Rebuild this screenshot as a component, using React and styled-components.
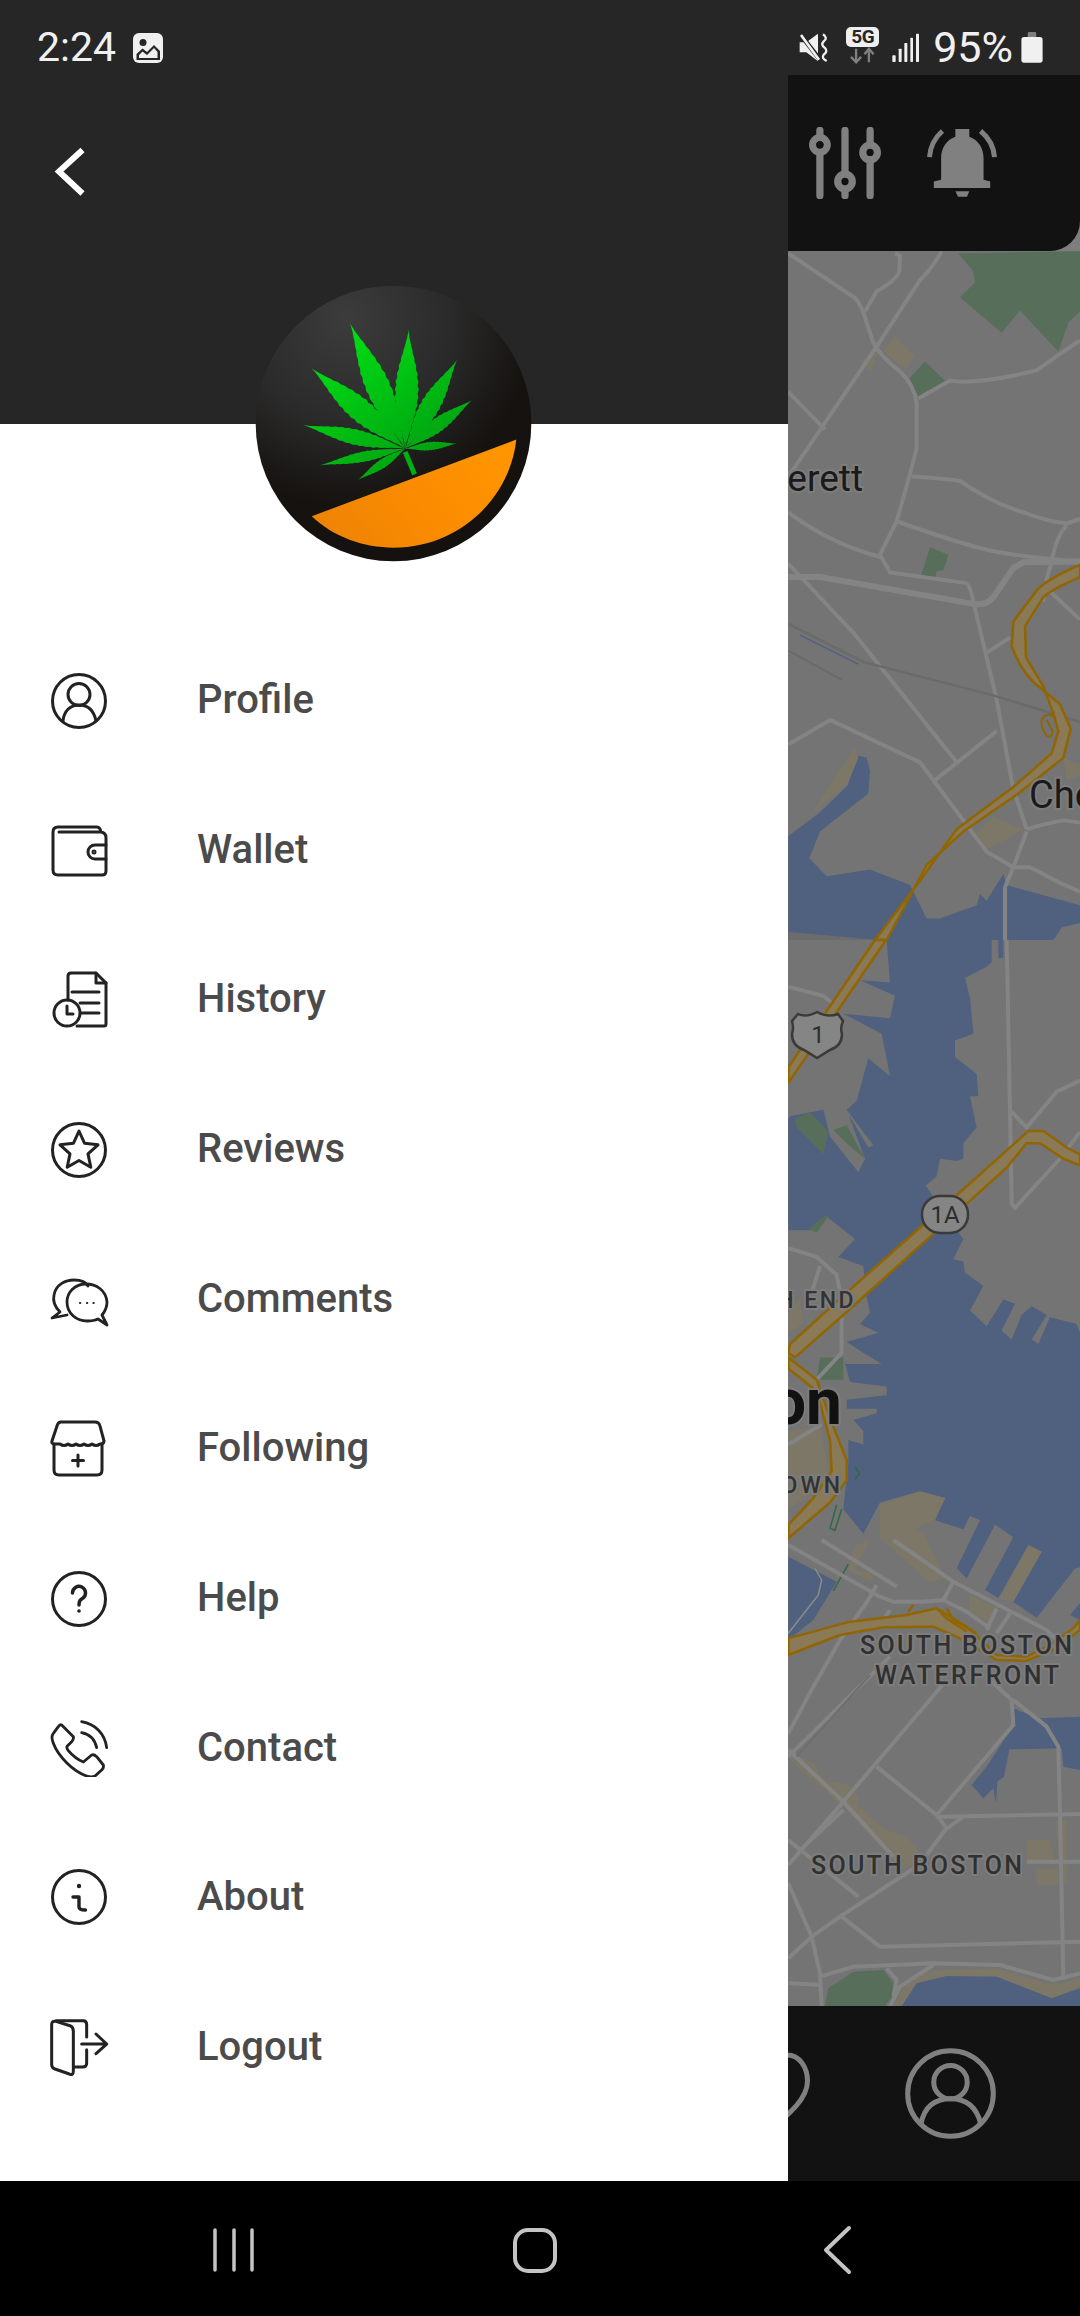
import React from "react";
import styled, { createGlobalStyle } from "styled-components";

const GlobalStyle = createGlobalStyle`
  html, body { margin: 0; padding: 0; background: #000; }
  #root { width: 1080px; height: 2316px; }
`;

const Screen = styled.div`
  width: 1080px; height: 2316px; display: flex; flex-direction: column; overflow: hidden;
  font-family: Roboto, "Liberation Sans", sans-serif; background: #000;
`;
const StatusBar = styled.div`
  height: 75px; flex: none; background: #262626; color: #f0f0f0; display: flex; align-items: center;
  padding: 20px 37px 0 37px; box-sizing: border-box;
`;
const StatusText = styled.span`
  font-size: ${p => p.$size}px; font-weight: 400; line-height: 1; margin-left: ${p => p.$ml || 0}px;
`;
const StatusGroup = styled.div`display: flex; align-items: center; margin-left: auto;`;
const StatusIcon = styled.svg`display: block; flex: none; margin-left: ${p => p.$ml || 0}px;`;
const FiveG = styled.div`display: flex; flex-direction: column; align-items: center; margin-left: 17px; width: 33px; margin-top: -4px;`;
const FiveGBadge = styled.span`
  width: 33px; height: 20px; border-radius: 5px; background: #efefef; color: #262626; font-size: 19px; font-weight: 700;
  line-height: 20px; text-align: center; letter-spacing: -.5px;
`;
const Main = styled.div`flex: 1; position: relative; display: flex; flex-direction: column; min-height: 0;`;
const TopBarBack = styled.div`height: 176px; flex: none; background: #7e7e7e;`;
const TopBar = styled.div`
  height: 100%; background: #121212; border-bottom-right-radius: 30px; display: flex; align-items: center; justify-content: flex-end;
  padding-right: 83px; gap: 45px; box-sizing: border-box;
`;
const MapArea = styled.div`
  flex: 1; min-height: 0; background: #747474;
`;
const MapSvg = styled.svg`
  display: block; width: 100%; height: 100%;
  path, polygon { vector-effect: non-scaling-stroke; }
`;
const MapLabel = styled.text`
  font-family: Roboto, "Liberation Sans", sans-serif; paint-order: stroke; stroke: #7d7d7d; stroke-width: ${p => p.$halo ?? 4}px;
  stroke-linejoin: round;
`;
const BottomBar = styled.div`
  height: 175px; flex: none; background: #121212; display: flex; align-items: center; justify-content: flex-end;
  padding-right: 84px; gap: 95px; box-sizing: border-box;
`;
const HeartIcon = styled.svg`margin-top: 2px; display: block;`;
const NavBar = styled.div`
  height: 135px; flex: none; background: #000; display: grid; grid-template-columns: repeat(3, 301px); justify-items: center;
  align-items: center; padding: 3px 0 0 83px; box-sizing: border-box;
`;
const NavBack = styled.svg`margin-left: 5px; display: block;`;
const Drawer = styled.aside`
  position: absolute; left: 0; top: 0; bottom: 0; width: 788px; background: #fff; display: flex; flex-direction: column;
`;
const DrawerHeader = styled.header`
  height: 349px; flex: none; background: #262626; position: relative; box-sizing: border-box;
`;
const BackButton = styled.svg`position: absolute; left: 50px; top: 65px;`;
const Avatar = styled.svg`position: absolute; left: 255px; top: 210px; display: block;`;
const Menu = styled.nav`display: flex; flex-direction: column; padding-top: 200px;`;
const MenuRow = styled.a`
  height: 149.7px; flex: none; display: flex; align-items: center; padding-left: 50px; color: #4b4b4b; text-decoration: none;
`;
const MenuIcon = styled.svg`
  width: 60px; height: 60px; flex: none; display: block; fill: none; stroke: #222; stroke-width: 3; stroke-linecap: round; stroke-linejoin: round;
`;
const MenuLabel = styled.span`
  margin-left: 87px; font-size: 40px; font-weight: 500; line-height: 1; position: relative; top: 1px;
`;

/* ---------- logo ---------- */
const blade = (bx, by, tx, ty, w) => {
  const dx = tx - bx, dy = ty - by, len = Math.hypot(dx, dy);
  const nx = -dy / len, ny = dx / len, n = 30, a = [], b = [];
  for (let i = 0; i <= n; i++) {
    const t = i / n;
    const hw = w * Math.pow(Math.sin(Math.PI * Math.pow(t, 0.95)), 1.35) * (i % 2 ? 1 : 0.9);
    const x = bx + dx * t, y = by + dy * t;
    a.push(`${(x + nx * hw).toFixed(1)},${(y + ny * hw).toFixed(1)}`);
    b.unshift(`${(x - nx * hw).toFixed(1)},${(y - ny * hw).toFixed(1)}`);
  }
  return a.concat(b).join(" ");
};
const BLADES = [
  [360, 160, 38], [535, 180, 36], [680, 270, 30], [725, 390, 22], [680, 520, 13],
  [245, 295, 36], [220, 465, 24], [270, 585, 16], [385, 628, 14],
];
const Logo = () => (
  <Avatar width="277" height="277" viewBox="75 45 830 830">
    <defs>
      <radialGradient id="ball" cx="0.33" cy="0.12" r="0.85">
        <stop offset="0" stopColor="#3c3c3c" />
        <stop offset="0.45" stopColor="#2a2a2a" />
        <stop offset="0.8" stopColor="#15120f" />
        <stop offset="1" stopColor="#14110e" />
      </radialGradient>
      <linearGradient id="leaf" gradientUnits="userSpaceOnUse" x1="340" y1="170" x2="620" y2="600">
        <stop offset="0" stopColor="#00e014" />
        <stop offset="1" stopColor="#009c10" />
      </linearGradient>
      <linearGradient id="orange" x1="0" y1="0.7" x2="1" y2="0.3">
        <stop offset="0" stopColor="#ee8405" />
        <stop offset="0.5" stopColor="#fb8b00" />
        <stop offset="1" stopColor="#ff9500" />
      </linearGradient>
    </defs>
    <circle cx="490" cy="460" r="413" fill="url(#ball)" />
    <g fill="url(#leaf)">
      {BLADES.map(([x, y, w], i) => <polygon key={i} points={blade(525, 535, x, y, w)} />)}
    </g>
    <path d="M525,545 L553,612" stroke="#00b010" strokeWidth="15" />
    <path d="M245,738 L858,508 C840,680 690,832 490,832 C400,832 310,800 245,738 Z" fill="url(#orange)" />
  </Avatar>
);

/* ---------- map, traced in the crop coordinates of the reference ---------- */
const Z4 = "translate(780,240) scale(.33333,.44643)";
const Z5 = "translate(780,940) scale(.33333,.44643)";
const Z10 = "translate(780,1540) scale(.33333)";
const WATER = "#4f617f", GREEN = "#566e5a", SAND = "#7c7767", ROAD = "#848484", HW = "#8a7a58", HWL = "#916500";

const z4Roads = [
  "M25,30 L225,130 Q245,145 260,185 L280,230 Q300,260 360,295 Q400,320 410,365 L410,465 Q400,500 350,630 L300,705 L330,745 L555,768 Q570,770 580,810 L650,1030 L700,1230 L740,1320",
  "M485,25 Q460,60 420,90 L280,250 L25,530",
  "M345,30 L360,35 L358,70 Q350,90 290,115 L255,160",
  "M25,340 L135,425",
  "M415,355 L510,315 Q590,325 770,292 L840,255 L900,225",
  "M395,530 Q500,535 540,540 Q640,590 730,610 Q800,630 860,635 L900,625",
  "M350,630 Q500,670 600,690 Q700,710 900,720",
  "M25,610 Q150,680 300,710",
  "M860,640 Q830,660 815,720 L800,760 L790,810",
  "M25,725 L220,880 L530,1170",
  "M25,1130 L150,1075 L420,1170 L560,1310 L620,1370 L700,1405 L750,1405 L840,1440 L900,1460",
  "M465,1210 L650,1100",
  "M620,925 L690,890",
  "M800,780 L900,850",
  "M740,1325 L700,1405 L675,1450 L675,1568",
  "M740,1320 Q780,1310 850,1300 L900,1305",
];
const z5Roads = [
  "M25,105 L130,125 L155,140",
  "M680,0 L690,380 L695,590 L705,600 L840,490 L900,430",
  "M695,385 L740,420 L830,340 L900,315",
  "M25,690 L110,710 L170,750 L185,810 L185,925 L110,985",
  "M120,730 L95,790",
  "M25,1130 L125,1085",
];
const z10Roads = [
  "M25,15 L300,170 L340,185 L430,185 L490,180 L560,215 L630,265",
  "M125,0 L350,140",
  "M340,0 L520,125 L800,270 L830,300",
  "M520,125 L490,180",
  "M650,205 L620,270",
  "M690,220 L650,280",
  "M290,135 L265,180 L180,300 L100,440 L25,580",
  "M330,210 L310,240",
  "M330,350 L25,650",
  "M500,420 L190,785 L25,975",
  "M290,680 L470,825 L500,865",
  "M25,630 L190,785 L340,950",
  "M470,825 L700,555 L695,480 L620,410",
  "M700,480 L800,560 L835,620 L840,820 L850,1320",
  "M480,830 L900,822",
  "M495,870 L550,830",
  "M495,870 L440,945",
  "M25,900 L235,1070",
  "M60,930 L190,810",
  "M440,960 L180,1130 L95,1190 L25,1255",
  "M185,1130 L300,1220 L900,1205",
  "M25,1030 L95,1190 L120,1300 L125,1400",
  "M25,1330 L125,1335",
  "M120,1310 L220,1280 L460,1270 L660,1275 L820,1320 L900,1300",
  "M460,1275 L360,1340 L330,1400",
  "M320,1285 L350,1320 L340,1370",
  "M740,965 L900,965",
];

const Roads = ({ list, w = 4 }) => (
  <g fill="none" stroke={ROAD} strokeWidth={w} strokeLinejoin="round">
    {list.map((d, i) => <path key={i} d={d} />)}
  </g>
);
const Highway = ({ d }) => <path d={d} fill={HW} stroke={HWL} strokeWidth="2.5" strokeLinejoin="round" />;

const CityMap = () => (
  <MapSvg viewBox="0 251 1080 1755" preserveAspectRatio="none">
    <g transform={Z4}>
      <polygon fill={WATER} points="25,1335 115,1285 205,1220 205,1180 235,1155 260,1160 270,1190 265,1240 120,1325 88,1385 140,1425 270,1410 390,1445 440,1520 480,1520 590,1490 600,1465 620,1480 670,1420 680,1445 900,1490 900,1530 845,1540 820,1568 640,1568 320,1568 25,1568" />
      <polygon fill="#6c6c6c" points="25,1550 300,1568 25,1568" />
      <polygon fill={GREEN} points="535,30 580,70 585,95 540,128 665,208 720,158 835,250 865,185 900,160 900,25" />
      <polygon fill={GREEN} points="388,310 435,272 495,315 415,350" />
      <polygon fill={GREEN} points="450,688 505,705 490,740 470,742 465,758 422,755" />
      <polygon fill={SAND} points="345,215 405,260 378,292 310,250" />
      <polygon fill={SAND} points="240,270 295,250 270,298" />
      <polygon fill={SAND} points="640,1290 730,1320 700,1335 620,1365 590,1330" />
      <polygon fill={SAND} points="850,1160 900,1175 900,1200 860,1210" />
      <polygon fill={SAND} points="90,1290 225,1135 235,1160 205,1215 120,1270" />
      <Roads list={z4Roads} />
      <path d="M25,755 L120,755 L580,815 Q620,820 640,800 L700,735 L730,722 L900,720" fill="none" stroke={ROAD} strokeWidth="6" />
      <path d="M25,860 L250,945 L640,1020 L900,1080" fill="none" stroke="#6a6a6a" strokeWidth="2.5" />
      <path d="M25,920 L185,985" fill="none" stroke="#6a6a6a" strokeWidth="2" />
      <path d="M60,885 L235,950" fill="none" stroke={WATER} strokeWidth="1.5" />
      <Highway d="M900,728 Q800,760 770,785 L700,855 L695,910 Q720,960 760,990 L840,1040 L872,1095 L850,1160 L715,1240 L550,1325 L440,1400 L320,1568 L285,1568 L425,1430 L530,1320 L700,1225 L815,1150 L835,1100 L820,1060 L790,1000 L738,935 L735,865 L790,800 Q820,780 900,755 Z" />
      <path d="M800,1110 Q780,1090 785,1075 Q800,1055 825,1070 M800,1110 Q815,1118 818,1100 L800,1075" fill="none" stroke={HWL} strokeWidth="2" />
    </g>
    <g transform={Z5}>
      <polygon fill={WATER} points="320,0 330,95 240,90 345,125 330,175 190,165 305,210 330,305 265,265 230,360 200,380 280,460 265,465 205,390 255,490 235,520 150,440 130,380 30,395 25,400 25,650 100,650 140,620 175,640 225,670 175,710 250,730 260,800 270,835 240,860 295,880 250,890 200,900 240,920 305,950 195,950 210,990 320,1000 320,1020 200,1030 200,1050 290,1050 290,1060 220,1075 250,1100 250,1130 205,1120 205,1170 190,1275 250,1330 300,1260 420,1235 495,1250 465,1300 550,1320 570,1290 600,1300 530,1407 560,1430 645,1310 700,1337 615,1456 655,1474 745,1355 785,1371 700,1483 770,1518 885,1408 900,1405 900,880 890,860 810,845 775,905 755,895 800,840 755,820 725,840 695,895 665,875 705,815 670,805 620,865 570,830 610,775 555,745 550,720 520,715 550,670 495,615 437,550 470,530 480,490 530,495 550,490 550,455 590,420 570,350 595,350 590,300 525,262 525,225 580,210 570,130 555,85 620,60 635,50 635,0" />
      <polygon fill={WATER} points="655,0 670,0 670,40 655,40" />
      <polygon fill={GREEN} points="45,400 90,385 145,430 130,480 50,420" />
      <polygon fill={GREEN} points="160,425 200,415 255,490 200,455" />
      <polygon fill={GREEN} points="120,935 190,935 190,985 135,985 110,985" />
      <polygon fill={GREEN} points="130,620 150,615 110,655 85,648" />
      <polygon fill={SAND} points="25,1100 120,1090 150,1200 90,1250 25,1270" />
      <polygon fill={SAND} points="300,1265 420,1235 495,1250 465,1300 400,1320 430,1330 500,1430 450,1440 300,1340" />
      <polygon fill={SAND} points="25,830 60,800 70,860 25,880" />
      <Roads list={z5Roads} />
      <Highway d="M285,0 L25,285 L25,320 L318,0 Z" />
      <Highway d="M900,480 L860,465 L790,428 L745,428 L540,565 L200,790 L30,905 L25,925 L45,935 L190,840 L680,510 L740,455 L780,455 L850,490 L900,505 Z" />
      <Highway d="M25,935 L110,985 L160,1090 L200,1165 L200,1210 L150,1260 L25,1340 L25,1310 L100,1250 L155,1190 L150,1120 L110,1010 L25,960 Z" />
      <path d="M225,1180 L238,1195 L225,1208 M170,1265 L150,1318 L165,1322 L185,1275 M205,1398 L160,1458" fill="none" stroke="#2f6a45" strokeWidth="1.5" />
    </g>
    <g transform={Z10}>
      <polygon fill={WATER} points="25,50 170,125 100,240 25,300" />
      <polygon fill={WATER} points="870,225 900,190 900,240" />
      <polygon fill={WATER} points="700,505 775,535 900,530 900,690 850,680 845,625 688,628 672,710 652,725 648,790 640,745 610,775 575,735 620,680 700,555" />
      <polygon fill={SAND} points="745,15 785,35 700,185 660,175" />
      <polygon fill={SAND} points="570,165 650,205 625,245 565,215" />
      <polygon fill={SAND} points="225,15 270,0 225,90 290,105 270,125 205,90" />
      <polygon fill={SAND} points="30,640 60,650 100,670 130,720 205,735 235,770 235,800 320,870 380,890 430,950 370,990 280,900 190,800 30,660" />
      <polygon fill={SAND} points="740,900 810,900 825,960 740,960" />
      <polygon fill={SAND} points="770,985 835,985 835,1035 770,1035" />
      <polygon fill={SAND} points="825,840 860,840 862,1030 850,1030" />
      <polygon fill={SAND} points="340,1398 390,1310 480,1290 650,1285 820,1335 900,1315 900,1340 815,1375 650,1310 500,1308 410,1330 365,1398" />
      <polygon fill={WATER} points="365,1398 410,1330 500,1308 650,1310 815,1375 900,1345 900,1398" />
      <path d="M135,1398 L145,1345 L220,1295 L310,1290 L340,1330 L340,1365 L315,1398 Z" fill={GREEN} />
      <path d="M105,85 L125,120 L115,165 L25,280" fill="none" stroke="#8a8a8a" strokeWidth="1.5" />
      <Roads list={z10Roads} />
      <path d="M50,650 L270,405" fill="none" stroke="#6e6e6e" strokeWidth="2" />
      <path d="M25,295 L210,245 L380,225 L470,205 L560,260 L650,345 L740,350 L810,315 L880,265 L900,240 L900,270 L820,330 L740,362 L650,360 L530,290 L460,260 L310,262 L180,285 L25,345 Z" fill={HW} stroke={HWL} strokeWidth="2.5" strokeLinejoin="round" />
      <path d="M385,215 L400,195 M470,205 L500,235 L560,275 M500,205 L520,240 L590,280" fill="none" stroke={HWL} strokeWidth="2.5" />
    </g>
    <path d="M792,1021 L798,1014 Q806,1018 817,1012 Q828,1018 838,1014 L843,1021 Q840,1028 842,1034 Q842,1046 830,1050 L817,1058 L804,1050 Q792,1046 792,1034 Q794,1028 792,1021 Z" fill="#858585" stroke="#3a3a3a" strokeWidth="2.5" />
    <MapLabel $halo={0} x="818" y="1043" textAnchor="middle" fontSize="24" fill="#2d2d2d">1</MapLabel>
    <rect x="922" y="1196" width="46" height="37" rx="18" fill="#858585" stroke="#3a3a3a" strokeWidth="2.5" />
    <MapLabel $halo={0} x="945" y="1223" textAnchor="middle" fontSize="24" fill="#2d2d2d">1A</MapLabel>
    <MapLabel x="863" y="491" textAnchor="end" fontSize="37" fill="#1a1a1a">Everett</MapLabel>
    <MapLabel x="1029" y="808" fontSize="38" fill="#1a1a1a">Chelsea</MapLabel>
    <MapLabel x="842" y="1424" textAnchor="end" fontSize="64" fontWeight="700" fill="#111">Boston</MapLabel>
    <MapLabel x="856" y="1308" textAnchor="end" fontSize="23" fontWeight="500" letterSpacing="2.5" fill="#333">NORTH END</MapLabel>
    <MapLabel x="843" y="1493" textAnchor="end" fontSize="23" fontWeight="500" letterSpacing="3" fill="#333">DOWNTOWN</MapLabel>
    <MapLabel x="860" y="1654" fontSize="25" fontWeight="500" textLength="212" fill="#303030">SOUTH BOSTON</MapLabel>
    <MapLabel x="875" y="1684" fontSize="25" fontWeight="500" textLength="184" fill="#303030">WATERFRONT</MapLabel>
    <MapLabel x="811" y="1874" fontSize="25" fontWeight="500" textLength="211" fill="#303030">SOUTH BOSTON</MapLabel>
  </MapSvg>
);

/* ---------- menu icons ---------- */
const star = (() => {
  const pts = [];
  for (let i = 0; i < 10; i++) {
    const r = i % 2 ? 9.5 : 20, a = -Math.PI / 2 + (i * Math.PI) / 5;
    pts.push(`${(29 + r * Math.cos(a)).toFixed(1)},${(33 + r * Math.sin(a)).toFixed(1)}`);
  }
  return pts.join(" ");
})();
const ICONS = {
  profile: (<>
    <circle cx="29" cy="32" r="26.5" />
    <circle cx="29" cy="25.5" r="11" />
    <path d="M13,52 C14,42 20,36 29,36 C38,36 44,42 46,52" />
  </>),
  wallet: (<>
    <path d="M9,13 H50 Q56,13 56,19 V52 Q56,56 52,56 H8 Q3,56 3,51 V13 Q3,8 8,8 H47 Q50,8 51,13" />
    <path d="M56,26 H45 a7,7 0 0 0 0,14 H56" />
    <circle cx="44" cy="33" r="1" />
  </>),
  history: (<>
    <path d="M18,32 V8 Q18,5 21,5 H46 L56,15 V56 Q56,58 54,58 H27" />
    <path d="M46,5 V15 H56" />
    <path d="M22,24 H49 M30,35 H49 M31,45 H49" />
    <circle cx="17" cy="45" r="13" />
    <path d="M17,38 V46 H23" />
  </>),
  reviews: (<>
    <circle cx="29" cy="32" r="26.5" />
    <polygon points={star} />
  </>),
  comments: (<>
    <path d="M17,47 L2,50 L10,44 Q2,36 4,27 C6,16 16,12 24,12 C30,12 36,14 38,18" strokeWidth="2.8" />
    <path d="M57,57 L52,47 Q57,41 57,34 C56,22 46,16 36,16 C25,16 17,24 17,34 C17,46 27,53 37,53 C42,53 46,52 48,51 Z" strokeWidth="2.8" />
    <path d="M30,35 h.2 M37,35 h.2 M43.5,35 h.2" strokeWidth="2.2" />
  </>),
  following: (<>
    <path d="M11,5 H45 Q49,5 50,9 L54,24 Q54,27 50,27 Q46,30 42,27 Q38,30 34,27 Q30,30 26,27 Q22,30 18,27 Q14,30 10,27 H5 Q1,27 2,24 L7,9 Q8,5 11,5 Z" />
    <path d="M4,27 V53 Q4,58 9,58 H47 Q52,58 52,53 V27" />
    <path d="M28,38 V49 M22.5,43.5 H33.5" />
  </>),
  help: (<>
    <circle cx="29" cy="32" r="26.5" />
    <path d="M22.5,26 a6.5,6.5 0 1 1 10.5,5 c-3,2 -4,3 -4,7" strokeWidth="3.5" />
    <circle cx="29" cy="44" r="1.8" fill="#222" stroke="none" />
  </>),
  contact: (
    <g transform="translate(-20,-17) scale(.33333)" strokeWidth="8.5">
      <path d="M95,75 L130,110 Q132,118 125,125 L112,138 Q108,143 115,152 C130,170 145,180 160,186 L185,165 Q192,162 200,170 L220,195 Q222,205 215,210 L195,228 Q185,233 170,228 C130,215 85,170 70,130 Q62,110 70,100 L85,80 Q90,72 95,75 Z" />
      <path d="M155,98 C180,103 195,120 200,143" />
      <path d="M155,65 C195,72 225,100 230,143" />
    </g>
  ),
  about: (<>
    <circle cx="29" cy="31" r="26.5" />
    <circle cx="29" cy="20" r="2.2" fill="#222" stroke="none" />
    <path d="M23,31 H29 V41 Q29,44 35.5,44" strokeWidth="3.4" />
  </>),
  logout: (
    <g transform="translate(-20,-316.3) scale(.33333)" strokeWidth="9">
      <path d="M65,975 Q65,962 78,965 L120,978 Q130,982 130,995 V1115 Q130,1128 118,1123 L75,1108 Q65,1104 65,1095 Z" />
      <path d="M78,963 H160 Q170,963 170,975 V1012" />
      <path d="M170,1050 V1090 Q170,1102 158,1102 H132" />
      <path d="M155,1033 H228 M198,1003 L230,1033 L198,1062" />
    </g>
  ),
};
const MENU = [
  ["profile", "Profile"], ["wallet", "Wallet"], ["history", "History"], ["reviews", "Reviews"], ["comments", "Comments"],
  ["following", "Following"], ["help", "Help"], ["contact", "Contact"], ["about", "About"], ["logout", "Logout"],
];

export default function App() {
  return (
    <Screen>
      <GlobalStyle />
      <StatusBar>
        <StatusText $size={41}>2:24</StatusText>
        <StatusIcon $ml={17} width="30" height="30" viewBox="0 0 30 30">
          <rect width="30" height="30" rx="6" fill="#f0f0f0" />
          <circle cx="10" cy="9.5" r="3.5" fill="#262626" />
          <path d="M3.5,27 V21 L9.5,15.5 L14,19 L21,12 L27,18 V27 Z" fill="#262626" />
          <path d="M6,25 V22 L9.5,18.5 L14,22 L21,15 L24.5,19 V25 Z" fill="#f0f0f0" />
        </StatusIcon>
        <StatusGroup>
          <StatusIcon width="30" height="30" viewBox="58 70 90 90">
            <path d="M60,98 L80,98 L115,72 L115,155 L80,128 L60,128 Z" fill="#f0f0f0" />
            <path d="M60,72 L125,155" stroke="#262626" strokeWidth="14" />
            <path d="M64,76 L118,150" stroke="#f0f0f0" strokeWidth="8" />
            <path d="M130,74 Q146,85 132,95 Q122,105 136,115 Q146,125 132,135 Q124,145 141,154" fill="none" stroke="#f0f0f0" strokeWidth="7" />
          </StatusIcon>
          <FiveG>
            <FiveGBadge>5G</FiveGBadge>
            <StatusIcon width="33" height="17" viewBox="195 118 98 48">
              <path d="M225,122 V160 M210,146 L225,162 L240,146 M263,162 V124 M250,138 L263,122 L277,138" fill="none" stroke="#808080" strokeWidth="7" />
            </StatusIcon>
          </FiveG>
          <StatusIcon $ml={13} width="28" height="30" viewBox="333 68 84 90">
            <rect x="334" y="135" width="10" height="20" rx="2" fill="#f0f0f0" />
            <rect x="353" y="115" width="9" height="40" rx="2" fill="#f0f0f0" />
            <rect x="370" y="98" width="9" height="57" rx="2" fill="#f0f0f0" />
            <rect x="388" y="82" width="8" height="73" rx="2" fill="#f0f0f0" />
            <rect x="405" y="70" width="9" height="85" rx="2" fill="#f0f0f0" />
          </StatusIcon>
          <StatusText $size={43} $ml={13}>95%</StatusText>
          <StatusIcon $ml={8} width="22" height="31" viewBox="725 68 65 92">
            <rect x="745" y="68" width="25" height="20" rx="4" fill="#808080" />
            <rect x="726" y="83" width="63" height="76" rx="8" fill="#f0f0f0" />
          </StatusIcon>
        </StatusGroup>
      </StatusBar>

      <Main>
        <TopBarBack>
          <TopBar>
            <svg width="74" height="72" viewBox="85 348 222 218" fill="#808080">
              <path d="M120,358 V556 M196,358 V556 M272,358 V556" stroke="#808080" strokeWidth="22" strokeLinecap="round" />
              <circle cx="120" cy="402" r="22" stroke="#808080" strokeWidth="22" fill="#121212" />
              <circle cx="120" cy="402" r="11" fill="#121212" />
              <circle cx="196" cy="513" r="22" stroke="#808080" strokeWidth="22" fill="#121212" />
              <circle cx="272" cy="425" r="22" stroke="#808080" strokeWidth="22" fill="#121212" />
            </svg>
            <svg width="70" height="68" viewBox="440 362 210 205" fill="#808080">
              <path d="M525,362 H567 V385 C595,395 610,420 610,450 V515 L630,520 V540 H460 V520 L482,515 V450 C482,420 497,395 525,385 Z" />
              <path d="M525,550 H567 L560,566 H533 Z" />
              <path d="M486,368 Q450,400 447,447 M601,368 Q640,400 643,447" fill="none" stroke="#808080" strokeWidth="15" />
            </svg>
          </TopBar>
        </TopBarBack>
        <MapArea><CityMap /></MapArea>
        <BottomBar>
          <HeartIcon width="100" height="90" viewBox="0 0 100 90" fill="none" stroke="#808080" strokeWidth="5">
            <path d="M50,17 C58,8 68,5 77,5 C90,5 97.5,18 97.5,31 C97.5,50 77,68 50,85 C23,68 2.5,50 2.5,31 C2.5,18 10,5 23,5 C32,5 42,8 50,17 Z" />
          </HeartIcon>
          <svg width="91" height="91" viewBox="377 146 272 272" fill="none" stroke="#808080" strokeWidth="15">
            <circle cx="513" cy="282" r="128" />
            <circle cx="513" cy="248" r="50" />
            <path d="M425,372 Q440,298 513,298 Q585,298 603,372" />
          </svg>
        </BottomBar>
        <Drawer>
          <DrawerHeader>
            <BackButton width="40" height="60" viewBox="0 0 40 60" fill="none" stroke="#fff" strokeWidth="6">
              <path d="M32.5,10 L9,31.5 L32.5,53.5" />
            </BackButton>
            <Logo />
          </DrawerHeader>
          <Menu>
            {MENU.map(([icon, label]) => (
              <MenuRow key={label}>
                <MenuIcon viewBox="0 0 60 60">{ICONS[icon]}</MenuIcon>
                <MenuLabel>{label}</MenuLabel>
              </MenuRow>
            ))}
          </Menu>
        </Drawer>
      </Main>

      <NavBar>
        <svg width="44" height="46" viewBox="0 0 44 46" stroke="#c4c4c4" strokeWidth="3.5" strokeLinecap="round">
          <path d="M3,3 V43 M22,3 V43 M40,3 V43" />
        </svg>
        <svg width="46" height="47" viewBox="0 0 46 47" fill="none" stroke="#c4c4c4" strokeWidth="4">
          <rect x="3" y="3" width="40" height="41" rx="13" />
        </svg>
        <NavBack width="30" height="50" viewBox="0 0 30 50" fill="none" stroke="#c4c4c4" strokeWidth="4" strokeLinecap="round" strokeLinejoin="round">
          <path d="M26,3 L3,25 L26,47" />
        </NavBack>
      </NavBar>
    </Screen>
  );
}
